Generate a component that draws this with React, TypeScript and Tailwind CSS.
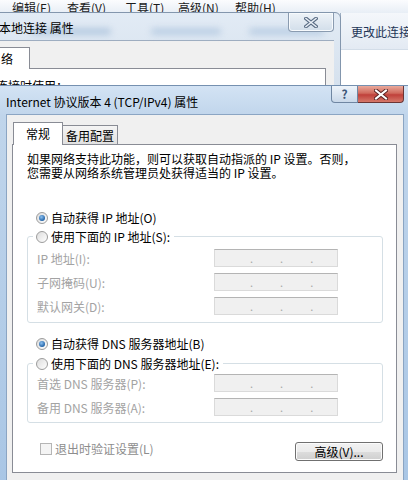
import React from "react";

function Radio({ checked }: { checked?: boolean }) {
  return (
    <span className="flex h-[12px] w-[12px] shrink-0 items-center justify-center rounded-full border border-[#9c9c9c] bg-[linear-gradient(135deg,#dcdcdc,#ffffff)]">
      {checked && (
        <span className="h-[6px] w-[6px] rounded-full bg-[radial-gradient(circle_at_40%_35%,#8cc0f0,#1c5ea3_75%)]" />
      )}
    </span>
  );
}

function IpBox() {
  return (
    <div className="flex h-[18px] w-[124px] items-center gap-[27px] border border-[#dadada] border-t-[#b4b4b4] bg-[#f0f0f0] pl-[35px] text-[11px] leading-[18px] text-[#a8a8a8]">
      <span>.</span>
      <span>.</span>
      <span>.</span>
    </div>
  );
}

function Field({ label }: { label: string }) {
  return (
    <div className="flex h-[18px] items-center">
      <span className="w-[186px] pl-[9px] text-[#a3a3a3]">{label}</span>
      <IpBox />
    </div>
  );
}

export default function App() {
  return (
    <div className="relative h-[480px] w-[408px] overflow-hidden bg-[#eef3f9] font-['Noto_Sans_CJK_SC','Noto_Sans',sans-serif] text-[12px] leading-[15px] text-black">
      {/* ================= MENU BAR (cửa sổ phía sau) ================= */}
      <div className="flex h-[14px] items-center bg-[linear-gradient(#fbfcfe,#e6edf5)] pl-[12px] leading-[13px] text-[#1b1b1b]">
        <span className="w-[55px]">编辑(E)</span>
        <span className="w-[58px]">查看(V)</span>
        <span className="w-[53px]">工具(T)</span>
        <span className="w-[57px]">高级(N)</span>
        <span>帮助(H)</span>
      </div>

      {/* ================= CỬA SỔ BÊN PHẢI ================= */}
      <div className="absolute left-[340px] top-[13px] h-[200px] w-[80px] border-l border-[#9fb0c4] bg-white">
        <div className="flex h-[37px] items-center whitespace-nowrap border-b border-[#d3dde8] bg-[linear-gradient(#f4f7fb,#e3eaf3)] pl-[10px] text-[#1e3557]">
          更改此连接
        </div>
      </div>

      {/* ================= HỘP THOẠI "本地连接 属性" ================= */}
      <div className="absolute left-[-10px] top-[12px] h-[90px] w-[351px] rounded-tr-[6px] border border-[#8396ad] bg-[linear-gradient(#e2ebf5,#d3dfec)]">
        <div className="relative h-[27px]">
          <div className="absolute left-[40px] top-[15px] h-[7px] w-[80px] rounded-full bg-[#b7cbe1] blur-[3px]" />
          <div className="absolute left-[160px] top-[15px] h-[7px] w-[70px] rounded-full bg-[#bccfe4] blur-[3px]" />
          <div className="absolute left-[258px] top-[15px] h-[7px] w-[75px] rounded-full bg-[#bccfe4] blur-[3px]" />
          <div className="relative pl-[8px] pt-[7px]">本地连接 属性</div>
          <div className="absolute right-[6px] top-0 flex h-[19px] w-[46px] items-center justify-center rounded-b-[4px] border border-t-0 border-[#8a9bb0] bg-[linear-gradient(#eef3f8,#d2deea)] shadow-[inset_0_0_0_1px_#f7fafd]">
            <svg width="14" height="11" viewBox="0 0 14 11">
              <path d="M2 1.5 L12 9.5 M12 1.5 L2 9.5" stroke="#596c84" strokeWidth="3.6" strokeLinecap="square" />
              <path d="M2 1.5 L12 9.5 M12 1.5 L2 9.5" stroke="#e9eff6" strokeWidth="1.6" strokeLinecap="square" />
            </svg>
          </div>
        </div>
        <div className="mr-[6px] h-[70px] border-t border-[#9eadc0] bg-[#f0f0f0] pt-[6px]">
          <div className="flex h-[21px] items-end pl-[2px]">
            <div className="relative z-10 -mb-px h-[22px] w-[37px] border border-b-0 border-[#898c95] bg-white pl-[7px] pt-[3px]">
              络
            </div>
          </div>
          <div className="mr-[8px] h-[40px] overflow-hidden border border-[#898c95] bg-white pt-[9px] pl-[4px]">
            连接时使用：
          </div>
        </div>
      </div>

      {/* ================= HỘP THOẠI TCP/IPv4 ================= */}
      <div className="absolute left-0 top-[85px] h-[400px] w-[408px] border-t border-[#7590b0] bg-[linear-gradient(#d3e3f4,#c0d5eb_30px,#a9c6e5)]">
        <div className="relative h-[28px] pl-[6px] pt-[8px]">
          Internet 协议版本 4 (TCP/IPv4) 属性
          <div className="absolute right-[4px] top-0 flex h-[17px]">
            <div className="flex w-[27px] items-center justify-center rounded-bl-[4px] border border-t-0 border-[#6f86a2] bg-[linear-gradient(#eef4fa,#c9d8e9)] text-[12px] font-bold leading-none text-[#3d5677]">
              ?
            </div>
            <div className="flex w-[46px] items-center justify-center rounded-br-[4px] border border-l-0 border-t-0 border-[#6b3535] bg-[linear-gradient(#e9a99b,#d0695c_45%,#c0403a_55%,#d5786a)]">
              <svg width="14" height="11" viewBox="0 0 14 11">
                <path d="M2 1.5 L12 9.5 M12 1.5 L2 9.5" stroke="#5a2424" strokeWidth="4" strokeLinecap="square" />
                <path d="M2 1.5 L12 9.5 M12 1.5 L2 9.5" stroke="#ffffff" strokeWidth="2" strokeLinecap="square" />
              </svg>
            </div>
          </div>
        </div>

        <div className="ml-[6px] mr-[4px] h-[380px] border border-[#8ba5c3] bg-[#f0f0f0] pl-[5px] pt-[7px]">
          {/* Tabs */}
          <div className="flex h-[22px] items-end pl-[1px]">
            <div className="relative z-10 -mb-px flex h-[23px] w-[50px] justify-center border border-b-0 border-[#898c95] bg-white pt-[3px]">
              常规
            </div>
            <div className="flex h-[19px] w-[55px] items-center justify-center border border-b-0 border-l-0 border-[#898c95] bg-[linear-gradient(#f5f5f5,#e1e1e1)]">
              备用配置
            </div>
          </div>

          {/* Panel */}
          <div className="flex h-[329px] w-[385px] flex-col border border-[#898c95] bg-white pl-[14px] pr-[13px] pt-[7px]">
            <p className="leading-[14px]">
              如果网络支持此功能，则可以获取自动指派的 IP 设置。否则，
              <br />
              您需要从网络系统管理员处获得适当的 IP 设置。
            </p>

            <div className="mt-[28px] flex h-[19px] items-center gap-[3px] pl-[9px]">
              <Radio checked />
              <span>自动获得 IP 地址(O)</span>
            </div>

            <div className="mt-[9px] flex flex-col rounded-[3px] border border-[#d5dfe5] pb-[7px]">
              <div className="-mt-[10px] ml-[5px] flex h-[19px] w-fit items-center gap-[3px] bg-white pl-[3px] pr-[4px]">
                <Radio />
                <span>使用下面的 IP 地址(S):</span>
              </div>
              <div className="mt-[3px] flex flex-col gap-[6px]">
                <Field label="IP 地址(I):" />
                <Field label="子网掩码(U):" />
                <Field label="默认网关(D):" />
              </div>
            </div>

            <div className="mt-[11px] flex h-[19px] items-center gap-[3px] pl-[9px]">
              <Radio checked />
              <span>自动获得 DNS 服务器地址(B)</span>
            </div>

            <div className="mt-[10px] flex flex-col rounded-[3px] border border-[#d5dfe5] pb-[6px]">
              <div className="-mt-[10px] ml-[5px] flex h-[19px] w-fit items-center gap-[3px] bg-white pl-[3px] pr-[4px]">
                <Radio />
                <span>使用下面的 DNS 服务器地址(E):</span>
              </div>
              <div className="mt-[1px] flex flex-col gap-[6px]">
                <Field label="首选 DNS 服务器(P):" />
                <Field label="备用 DNS 服务器(A):" />
              </div>
            </div>

            <div className="mt-[19px] flex items-start justify-between">
              <div className="ml-[13px] flex h-[13px] items-center gap-[3px] text-[#8d8d8d]">
                <span className="h-[12px] w-[12px] border border-[#b5b5b5] bg-[#f4f4f4]" />
                <span>退出时验证设置(L)</span>
              </div>
              <button className="h-[19px] w-[88px] rounded-[3px] border border-[#707070] bg-[linear-gradient(#f2f2f2,#ebebeb_50%,#dddddd_50%,#cfcfcf)] text-[12px] leading-none shadow-[inset_0_0_0_1px_#fbfbfb]">
                高级(V)...
              </button>
            </div>
          </div>
        </div>
      </div>
    </div>
  );
}
